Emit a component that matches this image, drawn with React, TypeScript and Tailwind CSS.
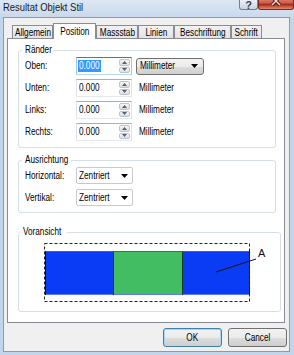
import React from "react";

function T({ children, c }: { children: React.ReactNode; c?: boolean }) {
  return (
    <span
      className={
        c
          ? "inline-block whitespace-nowrap origin-center scale-x-[0.82]"
          : "inline-block whitespace-nowrap origin-left scale-x-[0.82]"
      }
    >
      {children}
    </span>
  );
}

function UpDown() {
  return (
    <div className="w-[12px] flex flex-col gap-[1px] py-[1px] pr-[1px]">
      <div className="flex-1 flex items-center justify-center border border-[#c3c3c3] rounded-[2px] bg-[linear-gradient(#f6f6f6,#dedede)]">
        <svg width="5" height="3" viewBox="0 0 5 3"><path d="M0 3 L2.5 0 L5 3 Z" fill="#4d6185" /></svg>
      </div>
      <div className="flex-1 flex items-center justify-center border border-[#c3c3c3] rounded-[2px] bg-[linear-gradient(#f6f6f6,#dedede)]">
        <svg width="5" height="3" viewBox="0 0 5 3"><path d="M0 0 L2.5 3 L5 0 Z" fill="#4d6185" /></svg>
      </div>
    </div>
  );
}

function Arrow() {
  return (
    <svg width="7" height="4" viewBox="0 0 7 4">
      <path d="M0 0 L7 0 L3.5 4 Z" fill="#000" />
    </svg>
  );
}

function NumField({ focused }: { focused?: boolean }) {
  return (
    <div
      className={
        focused
          ? "w-[56px] h-[18px] flex bg-white border border-[#a4c9e3] border-t-[#3d7bad] border-b-[#b7d9ed]"
          : "w-[56px] h-[18px] flex bg-white border border-[#e2e3ea] border-t-[#abadb3] border-b-[#e3e9ef]"
      }
    >
      <div className="flex-1 flex items-center pl-[1px]">
        {focused ? (
          <span className="w-[23px] h-[12px] flex items-center bg-[#3399ff] text-white pl-[1px]">
            <T>0.000</T>
          </span>
        ) : (
          <span className="pl-[1px]">
            <T>0.000</T>
          </span>
        )}
      </div>
      <UpDown />
    </div>
  );
}

function Row({ label, first }: { label: string; first?: boolean }) {
  return (
    <div className="h-[18px] flex items-center">
      <div className="w-[51px]">
        <T>{label}</T>
      </div>
      <NumField focused={first} />
      {first ? (
        <div className="ml-[4px] w-[68px] h-[17px] flex items-center pl-[3px] pr-[5px] border border-[#707070] rounded-[3px] bg-[linear-gradient(#f2f2f2_0%,#ebebeb_50%,#dddddd_51%,#cfcfcf_100%)]">
          <T>Millimeter</T>
          <span className="ml-auto flex">
            <Arrow />
          </span>
        </div>
      ) : (
        <div className="ml-[7px]">
          <T>Millimeter</T>
        </div>
      )}
    </div>
  );
}

function Combo() {
  return (
    <div className="w-[57px] h-[17px] flex items-center pl-[2px] pr-[4px] bg-white border border-[#c5c9d0] rounded-[2px]">
      <T>Zentriert</T>
      <span className="ml-auto flex">
        <Arrow />
      </span>
    </div>
  );
}

const tabs: { t: string; w: string; sel?: boolean }[] = [
  { t: "Allgemein", w: "w-[41px]" },
  { t: "Position", w: "w-[43px]", sel: true },
  { t: "Massstab", w: "w-[42px]" },
  { t: "Linien", w: "w-[36px]" },
  { t: "Beschriftung", w: "w-[57px]" },
  { t: "Schrift", w: "w-[31px]" },
];

const BTN =
  "w-[59px] h-[19px] flex items-center justify-center rounded-[3px] bg-[linear-gradient(#f2f2f2_0%,#ebebeb_50%,#dddddd_51%,#cfcfcf_100%)]";

export default function App() {
  return (
    <div className="w-[294px] h-[355px] overflow-hidden flex flex-col bg-[#c3d5ea] font-['Liberation_Sans',Arial,sans-serif] text-[10px] leading-none text-black">
      {/* title bar */}
      <div className="h-[17px] shrink-0 flex bg-[linear-gradient(#dce7f3,#cad9eb)]">
        <div className="pl-[3px] text-[11.5px] leading-[15px] text-[#1a1a1a]">
          <T>Resultat Objekt Stil</T>
        </div>
        <div className="ml-auto flex items-start">
          <div className="w-[19px] h-[10px] flex justify-center items-end border border-t-0 border-[#6e7f95] rounded-b-[3px] bg-[linear-gradient(#e9eff6,#c9d6e4)] text-[#3b4352] text-[11px] leading-[10px] overflow-hidden">
            <span className="-mb-[1px] font-bold">?</span>
          </div>
          <div className="w-[36px] h-[10px] flex justify-center items-start border border-t-0 border-[#7a2b20] rounded-b-[3px] bg-[linear-gradient(#d87868_0%,#c85a46_35%,#a02c1c_50%,#c24a35_65%,#e08a6c_100%)] overflow-hidden">
            <svg width="16" height="9" viewBox="0 0 16 9">
              <path d="M4 -3 L12 5 M12 -3 L4 5" stroke="#5a1a10" strokeWidth="3.2" fill="none" />
              <path d="M4 -3 L12 5 M12 -3 L4 5" stroke="#f3dcd6" strokeWidth="1.4" fill="none" />
            </svg>
          </div>
        </div>
      </div>

      {/* client */}
      <div className="flex-1 ml-[3px] mr-[4px] mb-[3px] bg-[#f0f0f0] border border-[#8a9bb1] flex flex-col">
        {/* tabs */}
        <div className="mt-[5px] ml-[8px] h-[15px] flex items-end">
          {tabs.map((tb) =>
            tb.sel ? (
              <div
                key={tb.t}
                className={`${tb.w} h-[16px] -mb-[1px] relative z-10 bg-white border border-b-0 border-[#898c95] flex justify-center pt-[3px]`}
              >
                <T c>{tb.t}</T>
              </div>
            ) : (
              <div
                key={tb.t}
                className={`${tb.w} h-[13px] border border-b-0 border-[#898c95] bg-[linear-gradient(#f2f2f2,#e3e3e3)] flex justify-center pt-[2px]`}
              >
                <T c>{tb.t}</T>
              </div>
            )
          )}
        </div>

        {/* panel */}
        <div className="ml-[3px] w-[278px] bg-white border border-[#898c95] pl-[10px] pt-[5px] pb-[10px]">
          <fieldset className="w-[258px] border border-[#d5dfe5] rounded-[3px] pl-[6px] pt-[1px] pb-[6px]">
            <legend className="-ml-[3px] w-[32px] pl-[3px] leading-[12px] whitespace-nowrap">
              <T>Ränder</T>
            </legend>
            <div className="flex flex-col gap-[4px]">
              <Row label="Oben:" first />
              <Row label="Unten:" />
              <Row label="Links:" />
              <Row label="Rechts:" />
            </div>
          </fieldset>

          <fieldset className="mt-[6px] w-[258px] border border-[#d5dfe5] rounded-[3px] pl-[6px] pt-[1px] pb-[6px]">
            <legend className="-ml-[3px] w-[49px] pl-[3px] leading-[12px] whitespace-nowrap">
              <T>Ausrichtung</T>
            </legend>
            <div className="flex flex-col gap-[5px]">
              <div className="h-[17px] flex items-center">
                <div className="w-[51px]">
                  <T>Horizontal:</T>
                </div>
                <Combo />
              </div>
              <div className="h-[17px] flex items-center">
                <div className="w-[51px]">
                  <T>Vertikal:</T>
                </div>
                <Combo />
              </div>
            </div>
          </fieldset>

          <fieldset className="mt-[13px] w-[258px] border border-[#d5dfe5] rounded-[3px] pl-[6px] pt-[1px] pb-[6px]">
            <legend className="-ml-[5px] w-[47px] pl-[3px] leading-[12px] whitespace-nowrap">
              <T>Voransicht</T>
            </legend>
            <svg width="240" height="66" viewBox="0 0 240 66" className="ml-[15px] block">
              <rect x="5" y="12" width="204" height="44" fill="#0a3cf5" />
              <rect x="73" y="12" width="69" height="44" fill="#42bd62" />
              <line x1="5" y1="55.5" x2="209" y2="55.5" stroke="#5a7cf0" strokeWidth="1" />
              <line x1="5" y1="12.5" x2="209" y2="12.5" stroke="#e02828" strokeWidth="1" />
              <line x1="5.5" y1="12" x2="5.5" y2="56" stroke="#111" strokeWidth="1" />
              <line x1="73.5" y1="13" x2="73.5" y2="56" stroke="#1a3a1a" strokeWidth="1" />
              <line x1="142.5" y1="13" x2="142.5" y2="56" stroke="#1a3a1a" strokeWidth="1" />
              <line x1="209.5" y1="12" x2="209.5" y2="56" stroke="#111" strokeWidth="1" />
              <rect x="4.5" y="4.5" width="205" height="58" fill="none" stroke="#222" strokeWidth="1" strokeDasharray="3 2" />
              <line x1="176" y1="33" x2="216" y2="20" stroke="#111" strokeWidth="1" />
              <text x="218" y="18" fontSize="11" fill="#111" fontFamily="Liberation Sans, sans-serif">
                A
              </text>
            </svg>
          </fieldset>
        </div>

        {/* buttons */}
        <div className="mt-[5px] mr-[2px] flex justify-end gap-[6px]">
          <div className={`${BTN} border border-[#3c7fb1] shadow-[inset_0_0_0_1px_#a8d6f5]`}>
            <T c>OK</T>
          </div>
          <div className={`${BTN} border border-[#707070]`}>
            <T c>Cancel</T>
          </div>
        </div>
      </div>
    </div>
  );
}
